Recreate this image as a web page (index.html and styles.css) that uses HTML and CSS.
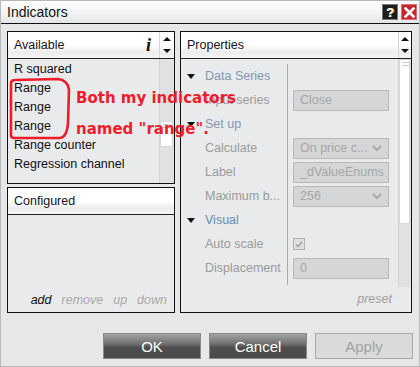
FILE: index.html
```html
<!DOCTYPE html>
<html>
<head>
<meta charset="UTF-8">
<title>Indicators</title>
<link rel="stylesheet" href="styles.css">
</head>
<body>
<div class="window">
	<!-- title bar -->
	<div class="titlebar">
		<span class="title">Indicators</span>
		<span class="tb-btn help">?</span>
		<span class="tb-btn close">
			<svg width="11" height="11" viewBox="0 0 11 11"><path d="M1.5 1.5 L9.5 9.5 M9.5 1.5 L1.5 9.5" stroke="#fff" stroke-width="2.6" stroke-linecap="square"/></svg>
		</span>
	</div>

	<div class="main">
		<div class="left-col">
			<!-- available -->
			<div class="panel available">
				<div class="panel-head">
					<span class="head-title">Available</span>
					<span class="info">i</span>
					<span class="head-arrows"><span class="arrow-up"></span><span class="arrow-down"></span></span>
				</div>
				<div class="panel-body list-body">
					<ul class="ind-list">
						<li>R squared</li>
						<li>Range</li>
						<li>Range</li>
						<li>Range</li>
						<li>Range counter</li>
						<li>Regression channel</li>
					</ul>
					<div class="vscroll small"><div class="thumb"></div></div>
				</div>
			</div>

			<!-- configured -->
			<div class="panel configured">
				<div class="panel-head">
					<span class="head-title">Configured</span>
				</div>
				<div class="panel-body conf-body">
					<div class="links">
						<span class="on">add</span>
						<span>remove</span>
						<span>up</span>
						<span>down</span>
					</div>
				</div>
			</div>
		</div>

		<!-- properties -->
		<div class="panel properties">
			<div class="panel-head">
				<span class="head-title">Properties</span>
				<span class="head-arrows narrow"><span class="arrow-up"></span><span class="arrow-down"></span></span>
			</div>
			<div class="prop-body">
				<div class="tree">
					<div class="name group"><span class="tri"></span>Data Series</div><div class="val"></div>
					<div class="name">Input series</div><div class="val"><span class="box">Close</span></div>
					<div class="name group"><span class="tri"></span>Set up</div><div class="val"></div>
					<div class="name">Calculate</div><div class="val"><span class="box drop">On price c...<svg width="10" height="7" viewBox="0 0 10 7"><path d="M1 1 L5 5 L9 1" fill="none" stroke="#a8a8a8" stroke-width="2"/></svg></span></div>
					<div class="name">Label</div><div class="val"><span class="box">_dValueEnums</span></div>
					<div class="name">Maximum b...</div><div class="val"><span class="box drop">256<svg width="10" height="7" viewBox="0 0 10 7"><path d="M1 1 L5 5 L9 1" fill="none" stroke="#a8a8a8" stroke-width="2"/></svg></span></div>
					<div class="name group visual"><span class="tri"></span>Visual</div><div class="val"></div>
					<div class="name">Auto scale</div><div class="val"><span class="check"><svg width="8" height="7" viewBox="0 0 8 7"><path d="M1 3.5 L3 5.5 L7 1" fill="none" stroke="#a0a0a0" stroke-width="1.5"/></svg></span></div>
					<div class="name">Displacement</div><div class="val"><span class="box">0</span></div>
					<div class="name tail"></div><div class="val tail"></div>
				</div>
				<div class="vscroll big"><div class="thumb"></div></div>
			</div>
			<div class="prop-foot">preset</div>
		</div>
	</div>

	<!-- dialog buttons -->
	<div class="buttons">
		<button type="button" class="btn dark">OK</button>
		<button type="button" class="btn dark">Cancel</button>
		<button type="button" class="btn off">Apply</button>
	</div>

	<!-- red note drawn over the dialog -->
	<div class="note">
		<svg class="loop" width="70" height="70" viewBox="0 0 70 70"><path d="M4 60 L4 6 Q4 3 8 3 L51 2 Q61 3 62 13 L61 46 Q60 60 53 61 L7 61 Q4 61 4 58" fill="none" stroke="#ec1c2a" stroke-width="2.6"/></svg>
		<div class="note-text">
			<div>Both my indicators</div>
			<div>named "range".</div>
		</div>
	</div>
</div>
</body>
</html>
```

FILE: styles.css
```css
*{
	box-sizing: border-box;
}
body{
	margin: 0;
	font-family: "Liberation Sans", Arial, sans-serif;
}

.window{
	position: relative;
	width: 420px;
	height: 367px;
	border: 1px solid #b8b9ba;
	background: #e6e7e8;
	display: flex;
	flex-direction: column;
}

/* title bar */
.titlebar{
	height: 23px;
	border-bottom: 1px solid #111;
	background: linear-gradient(#fdfdfd, #f3f4f5 55%, #e3e4e5);
	display: flex;
	align-items: center;
	padding: 0 2px 0 6px;
}
.title{
	flex: 1;
	font-size: 14px;
	color: #111;
}
.tb-btn{
	width: 16px;
	height: 16px;
	margin-left: 3px;
	display: flex;
	align-items: center;
	justify-content: center;
}
.help{
	background: #1c1c1c;
	border: 1px solid #777;
	color: #fff;
	font-weight: bold;
	font-size: 13px;
	text-shadow: 1px 0 0 #e9a23a;
}
.close{
	background: #c4282d;
	border: 1px solid #e07070;
}

/* main area */
.main{
	display: flex;
	gap: 5px;
	padding: 7px 0 0 6px;
	height: 289px;
}
.left-col{
	width: 168px;
	display: flex;
	flex-direction: column;
	gap: 3px;
}
.panel{
	border: 1px solid #111;
	background: #e9eaeb;
	display: flex;
	flex-direction: column;
}
.available{
	height: 153px;
}
.configured{
	height: 126px;
}
.properties{
	width: 232px;
	height: 282px;
}
.panel-head{
	height: 27px;
	border-bottom: 1px solid #222;
	background: linear-gradient(#fff, #fff 50%, #ececec 80%, #f6f6f6);
	display: flex;
	align-items: stretch;
	flex-shrink: 0;
}
.head-title{
	flex: 1;
	padding-left: 6px;
	font-size: 12.5px;
	color: #141428;
	display: flex;
	align-items: center;
}
.info{
	font-family: "Liberation Serif", serif;
	font-style: italic;
	font-weight: bold;
	font-size: 18px;
	color: #111;
	padding-right: 8px;
	display: flex;
	align-items: center;
}
.head-arrows{
	width: 15px;
	border-left: 1px solid #d6d6d6;
	display: flex;
	flex-direction: column;
	align-items: center;
	justify-content: space-between;
	padding: 5px 0 5px;
}
.head-arrows.narrow{
	width: 13px;
}
.arrow-up{
	width: 0;
	height: 0;
	border-left: 4px solid transparent;
	border-right: 4px solid transparent;
	border-bottom: 4px solid #111;
}
.arrow-down{
	width: 0;
	height: 0;
	border-left: 4px solid transparent;
	border-right: 4px solid transparent;
	border-top: 4px solid #111;
}

/* available list */
.list-body{
	flex: 1;
	display: flex;
}
.ind-list{
	flex: 1;
	list-style: none;
	margin: 0;
	padding: 1px 0 0 6px;
	font-size: 12.5px;
	color: #111;
}
.ind-list li{
	height: 19px;
	line-height: 19px;
}
.vscroll{
	background: #e0e1e2;
	border-left: 1px solid #d2d2d2;
	position: relative;
}
.vscroll.small{
	width: 15px;
}
.vscroll.big{
	width: 13px;
}
.thumb{
	background: #fff;
	border: 1px solid #d8d8d8;
	margin: 0 1px 0 0;
	background-image: linear-gradient(#ccc, #ccc), linear-gradient(#ccc, #ccc);
	background-size: 7px 1px, 7px 1px;
	background-position: 2px 2px, 2px 5px;
	background-repeat: no-repeat;
}
.vscroll.small .thumb{
	margin-top: 62px;
	height: 26px;
}
.vscroll.big .thumb{
	height: 165px;
}

/* configured */
.conf-body{
	flex: 1;
	display: flex;
	align-items: flex-end;
	justify-content: flex-end;
	padding: 0 7px 5px 0;
}
.links{
	display: flex;
	gap: 10px;
	font-size: 12.5px;
	font-style: italic;
	color: #a9a9a9;
}
.links .on{
	color: #111;
}

/* properties */
.prop-body{
	height: 228px;
	display: flex;
}
.tree{
	flex: 1;
	display: grid;
	grid-template-columns: 107px 1fr;
	grid-auto-rows: 24px;
	padding-top: 5px;
	font-size: 12.5px;
	color: #9a9a9a;
}
.name{
	border-right: 1px solid #a9a9a9;
	padding-left: 24px;
	display: flex;
	align-items: center;
	white-space: nowrap;
}
.name.group{
	padding-left: 6px;
	color: #8198b2;
}
.name.visual{
	color: #6689b6;
}
.tri{
	width: 0;
	height: 0;
	border-left: 4px solid transparent;
	border-right: 4px solid transparent;
	border-top: 5px solid #111;
	margin-right: 10px;
}
.tree .tail{
	height: 5px;
}
.val{
	padding: 0 8px 0 5px;
	display: flex;
	align-items: center;
}
.box{
	width: 96px;
	height: 21px;
	background: #d5d6d7;
	border: 1px solid #b8b8b8;
	color: #a6a6a6;
	font-size: 12.5px;
	padding: 0 6px;
	display: flex;
	align-items: center;
	justify-content: space-between;
	white-space: nowrap;
	overflow: hidden;
}
.check{
	width: 12px;
	height: 12px;
	border: 1px solid #b0b0b0;
	background: #dedede;
	display: flex;
	align-items: center;
	justify-content: center;
}
.prop-foot{
	flex: 1;
	text-align: right;
	padding: 5px 19px 0 0;
	font-size: 12.5px;
	font-style: italic;
	color: #a0a0a0;
}

/* buttons */
.buttons{
	display: flex;
	justify-content: flex-end;
	gap: 8px;
	padding: 20px 6px 0 0;
}
.btn{
	width: 98px;
	height: 26px;
	font-family: "Liberation Sans", Arial, sans-serif;
	font-size: 15px;
	padding: 0;
}
.btn.dark{
	border: 1px solid #8a8a8a;
	background: linear-gradient(#a4a4a4, #6a6a6a 45%, #4e4e4e 55%, #4a4a4a);
	color: #fff;
}
.btn.off{
	border: 1px solid #a8a8a8;
	background: #d9dadb;
	color: #a3a3a3;
}

/* annotation overlay */
.note{
	position: absolute;
	left: 6px;
	top: 76px;
}
.loop{
	position: absolute;
	left: 0;
	top: 0;
}
.note-text{
	position: absolute;
	left: 69px;
	top: 6px;
	width: 200px;
	font-family: "DejaVu Sans", Verdana, sans-serif;
	font-size: 15px;
	font-weight: bold;
	color: #ee1d2b;
	line-height: 31px;
	white-space: nowrap;
}
```
